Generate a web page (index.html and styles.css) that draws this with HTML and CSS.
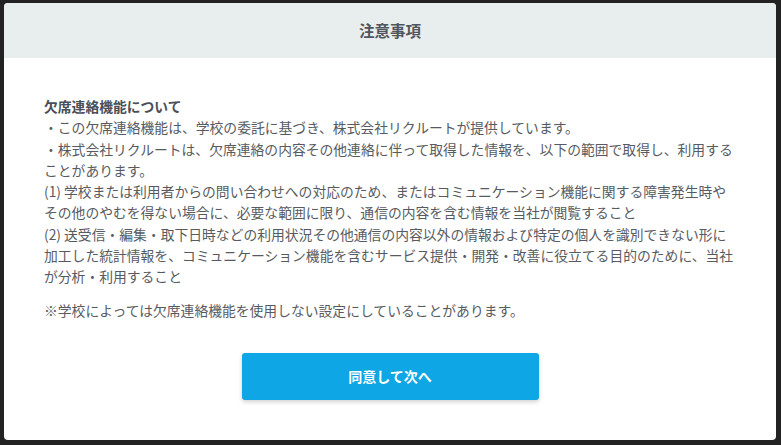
FILE: index.html
```html
<!DOCTYPE html>
<html lang="ja">
<head>
<meta charset="utf-8">
<title>注意事項</title>
<link rel="stylesheet" href="styles.css">
</head>
<body>
<div class="modal">
  <header class="modal-header">
    <h1 class="modal-title">注意事項</h1>
  </header>
  <div class="modal-body">
    <div class="notice">
      <p class="notice-heading">欠席連絡機能について</p>
      <p>・この欠席連絡機能は、学校の委託に基づき、株式会社リクルートが提供しています。</p>
      <p>・株式会社リクルートは、欠席連絡の内容その他連絡に伴って取得した情報を、以下の範囲で取得し、利用することがあります。</p>
      <p>(1) 学校または利用者からの問い合わせへの対応のため、またはコミュニケーション機能に関する障害発生時やその他のやむを得ない場合に、必要な範囲に限り、通信の内容を含む情報を当社が閲覧すること</p>
      <p>(2) 送受信・編集・取下日時などの利用状況その他通信の内容以外の情報および特定の個人を識別できない形に加工した統計情報を、コミュニケーション機能を含むサービス提供・開発・改善に役立てる目的のために、当社が分析・利用すること</p>
    </div>
    <p class="note">※学校によっては欠席連絡機能を使用しない設定にしていることがあります。</p>
    <div class="actions">
      <button class="btn-primary" type="button">同意して次へ</button>
    </div>
  </div>
</div>
</body>
</html>
```

FILE: styles.css
```css
* { box-sizing: border-box; }
html, body { height: 100%; }
body {
  margin: 0;
  padding: 3px 5px 5px 4px;
  background: #222222;
  font-family: "Noto Sans CJK JP", "Noto Sans", sans-serif;
  color: #575b61;
}
.modal {
  height: 437px;
  background: #ffffff;
  border-radius: 4px;
  overflow: hidden;
  display: flex;
  flex-direction: column;
}
.modal-header {
  height: 55px;
  background: #e8eeee;
  display: flex;
  align-items: center;
  justify-content: center;
}
.modal-title {
  margin: 0;
  font-size: 15.5px;
  font-weight: 700;
  color: #50555e;
  line-height: 1;
  padding-top: 1px;
}
.modal-body {
  padding: 38px 40px 0 40px;
}
.notice p,
.note {
  margin: 0;
  font-size: 13.8px;
  line-height: 21.25px;
}
.notice-heading {
  font-weight: 700;
  color: #4a4f58;
}
.note {
  margin-top: 13px;
}
.actions {
  display: flex;
  justify-content: center;
  margin-top: 31px;
}
.btn-primary {
  width: 297px;
  height: 47px;
  border: none;
  border-radius: 3px;
  background: #0ea6e4;
  color: #ffffff;
  font-family: "Noto Sans CJK JP", "Noto Sans", sans-serif;
  font-size: 14px;
  font-weight: 700;
  box-shadow: 0 2px 4px rgba(0, 0, 0, 0.18);
  cursor: pointer;
}
```
